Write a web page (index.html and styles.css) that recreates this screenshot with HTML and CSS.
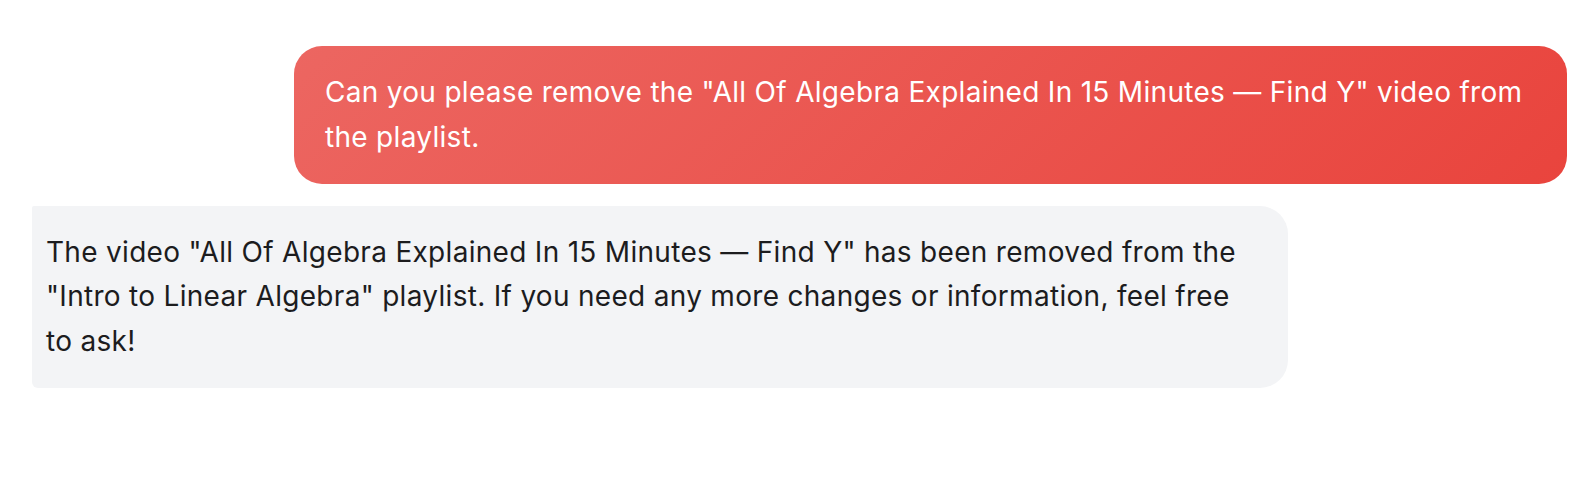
FILE: index.html
```html
<!DOCTYPE html>
<html lang="en">
<head>
<meta charset="utf-8">
<title>Chat</title>
<link rel="stylesheet" href="styles.css">
</head>
<body>
<main class="chat">
  <div class="msg msg-user">
    <p>Can you please remove the "All Of Algebra Explained In 15 Minutes — Find Y" video from the playlist.</p>
  </div>
  <div class="msg msg-assistant">
    <p>The video "All Of Algebra Explained In 15 Minutes — Find Y" has been removed from the "Intro to Linear Algebra" playlist. If you need any more changes or information, feel free to ask!</p>
  </div>
</main>
</body>
</html>
```

FILE: styles.css
```css
* { box-sizing: border-box; }
html, body {
  margin: 0;
  padding: 0;
  background: #ffffff;
}
body {
  font-family: Inter, "Noto Sans", "Liberation Sans", sans-serif;
  font-size: 28px;
  line-height: 44.8px;
  letter-spacing: 0.3px;
  -webkit-font-smoothing: antialiased;
}
.chat {
  display: flex;
  flex-direction: column;
  gap: 22px;
  padding: 46px 29px 0 32px;
}
.msg p {
  margin: 0;
}
.msg-user {
  align-self: flex-end;
  width: 1273px;
  padding: 24px 32px 24px 31px;
  border-radius: 28px;
  background: linear-gradient(135deg, #ec6661 0%, #e9443d 100%);
  color: #ffffff;
}
.msg-assistant {
  align-self: flex-start;
  width: 1256px;
  padding: 24px 50px 24px 14px;
  border-radius: 2px 28px 28px 6px;
  background: #f3f4f6;
  color: #1c1c1e;
}
```
